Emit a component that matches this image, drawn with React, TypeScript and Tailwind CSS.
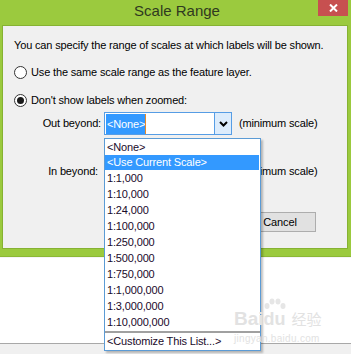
import React from "react";

const F = { fontFamily: '"Liberation Sans", Arial, sans-serif' };

function Radio({ checked }: { checked?: boolean }) {
  return (
    <div className="w-[13px] h-[13px] rounded-full border border-[#333333] bg-white flex items-center justify-center shrink-0">
      {checked && <div className="w-[7px] h-[7px] rounded-full bg-[#1a1a1a]" />}
    </div>
  );
}

function Chevron() {
  return (
    <svg width="9" height="6" viewBox="0 0 9 6">
      <path d="M1 1 L4.5 4.5 L8 1" stroke="#000" strokeWidth="2" fill="none" />
    </svg>
  );
}

const items = [
  "1:1,000",
  "1:10,000",
  "1:24,000",
  "1:100,000",
  "1:250,000",
  "1:500,000",
  "1:750,000",
  "1:1,000,000",
  "1:3,000,000",
  "1:10,000,000",
];

export default function App() {
  return (
    <div
      className="relative w-[351px] h-[354px] bg-white overflow-hidden text-[11px] tracking-[-0.15px] text-black"
      style={F}
    >
      {/* Dialog window */}
      <div className="bg-[#9bca3e] pl-[2px] pr-[3px] pb-[7px] border-b border-[#8cb836]">
        <div className="relative h-[25px] flex items-start justify-center">
          <span className="text-[15px] tracking-normal text-[#2f3a20] leading-[22px] ml-[4px]">Scale Range</span>
          <div className="absolute right-[0px] top-0 w-[30px] h-[16px] bg-[#c75050] flex items-center justify-center">
            <svg width="9" height="8" viewBox="0 0 9 8">
              <path d="M1 0.5 L8 7.5 M8 0.5 L1 7.5" stroke="#fff" strokeWidth="2" />
            </svg>
          </div>
        </div>
        <div className="h-[224px] bg-[#f0f0f0] border border-[#86b232] pl-[11px] pt-[12px] flex flex-col">
          <div className="h-[15px] leading-[15px]">
            You can specify the range of scales at which labels will be shown.
          </div>
          <div className="mt-[12px] flex items-center gap-[4px] h-[15px] pl-[0px]">
            <Radio />
            <span>Use the same scale range as the feature layer.</span>
          </div>
          <div className="mt-[13px] flex items-center gap-[4px] h-[15px]">
            <Radio checked />
            <span>Don't show labels when zoomed:</span>
          </div>
          {/* Out beyond row */}
          <div className="mt-[4px] flex items-center h-[23px]">
            <span className="w-[90px] text-right pr-[3px]">Out beyond:</span>
            <div className="w-[128px] h-[23px] border border-[#569de5] bg-white flex">
              <div className="flex-1 p-[1px] flex">
                <div className="relative h-[20px] w-[40px] bg-[#3399ff] text-white leading-[20px] pl-[1px]">
                  &lt;None&gt;
                  <div className="absolute right-0 top-0 w-[1px] h-[20px] bg-[#e88a2a]" />
                </div>
              </div>
              <div className="w-[17px] h-full bg-[#dcecfc] border-l border-[#569de5] flex items-center justify-center">
                <Chevron />
              </div>
            </div>
            <span className="ml-[7px]">(minimum scale)</span>
          </div>
          {/* In beyond row */}
          <div className="mt-[25px] flex items-center h-[23px]">
            <span className="w-[90px] text-right pr-[6px]">In beyond:</span>
            <div className="w-[128px] h-[23px] border border-[#adadad] bg-white" />
            <span className="ml-[7px]">(minimum scale)</span>
          </div>
          {/* Buttons */}
          <div className="mt-[29px] flex h-[20px] pl-[146px] gap-[6px]">
            <div className="w-[75px] h-[20px] border border-[#adadad] bg-[#e1e1e1] flex items-center justify-center">
              OK
            </div>
            <div className="w-[75px] h-[20px] border border-[#adadad] bg-[#e1e1e1] flex items-center justify-center pl-[3px]">
              Cancel
            </div>
          </div>
        </div>
      </div>
      {/* below area */}
      <div className="h-[86px] bg-white border-t border-[#f4f4f4]" />
      <div className="h-[11px] bg-[#f0f0f0] border-t border-[#a8a8a8]" />

      {/* Dropdown list overlay */}
      <div className="absolute left-[104px] top-[138px] w-[157px] h-[213px] bg-white border border-[#5b9bd5] shadow-[2px_2px_2px_rgba(0,0,0,0.25)] flex flex-col pl-[2px] pr-[1px]">
        <div className="h-[15px] leading-[15px] mt-[1px] text-[#1a0a2a]">&lt;None&gt;</div>
        <div className="h-[15px] leading-[15px] bg-[#3399ff] text-white -ml-[2px] pl-[2px]">&lt;Use Current Scale&gt;</div>
        {items.map((t) => (
          <div key={t} className="h-[16px] leading-[16px] text-[#1a0a2a]">
            {t}
          </div>
        ))}
        <div className="mt-[1px] h-[3px] border-t border-b border-[#a0a0a0] -ml-[2px] -mr-[1px]" />
        <div className="h-[17px] leading-[17px] text-[#1a0a2a]">&lt;Customize This List...&gt;</div>
      </div>

      {/* watermark */}
      <div className="absolute left-[234px] top-[298px] pointer-events-none text-[#e2e2e2] flex flex-col items-start">
        <div className="flex items-end">
          <span className="text-[19px] font-bold tracking-[0px] leading-[20px]" style={F}>Bai</span>
          <div className="relative flex flex-col items-center">
            <svg width="22" height="12" viewBox="0 0 22 12" className="mb-[-1px]">
              <ellipse cx="3" cy="8" rx="2.5" ry="3" fill="#e6e6e6" />
              <ellipse cx="8" cy="3.5" rx="2.5" ry="3" fill="#e6e6e6" />
              <ellipse cx="14" cy="3.5" rx="2.5" ry="3" fill="#e6e6e6" />
              <ellipse cx="19" cy="8" rx="2.5" ry="3" fill="#e6e6e6" />
            </svg>
            <span className="text-[18px] font-bold tracking-[0px] leading-[20px]" style={F}>du</span>
          </div>
          <span
            className="ml-[6px] text-[15px] leading-[20px] tracking-normal"
            style={{ fontFamily: '"Noto Sans CJK SC", sans-serif' }}
          >
            经验
          </span>
        </div>
        <span className="text-[10px] tracking-[0.3px] leading-[14px] mt-[3px]">jingyan.baidu.com</span>
      </div>
    </div>
  );
}
